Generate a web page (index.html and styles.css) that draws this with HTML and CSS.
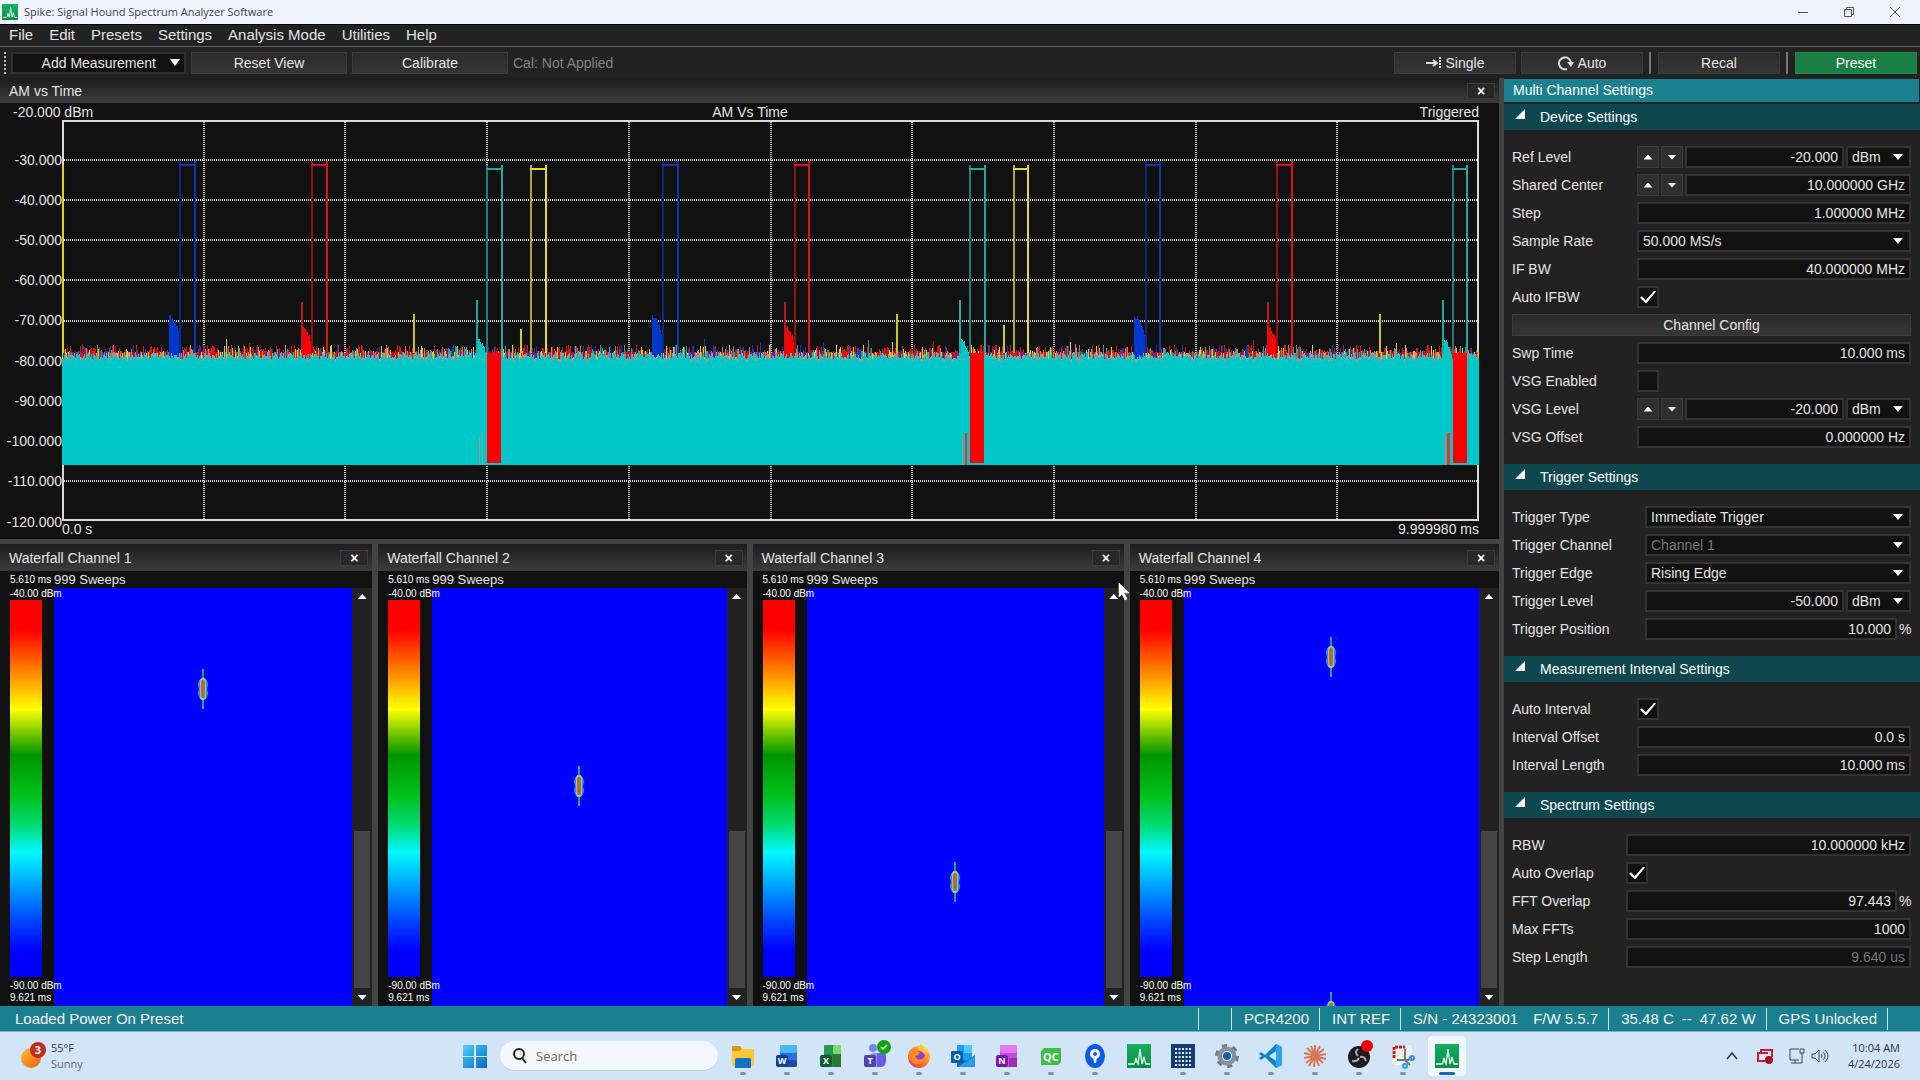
FILE: index.html
```html
<!DOCTYPE html>
<html lang="en">
<head>
<meta charset="utf-8">
<title>Spike: Signal Hound Spectrum Analyzer Software</title>
<link rel="stylesheet" href="styles.css">
</head>
<body>
<svg class="defs" aria-hidden="true">
  <defs>
    <linearGradient id="gGreen" x1="0" y1="0" x2="0" y2="1"><stop offset="0" stop-color="#16b060"/><stop offset="1" stop-color="#0a8c46"/></linearGradient>
    <linearGradient id="gWin" x1="0" y1="0" x2="1" y2="1"><stop offset="0" stop-color="#4fd0f8"/><stop offset="1" stop-color="#0468c8"/></linearGradient>
    <linearGradient id="gSun" x1="0" y1="0" x2="1" y2="1"><stop offset="0" stop-color="#fbc02d"/><stop offset="1" stop-color="#ef5f10"/></linearGradient>
    <linearGradient id="gFox" x1="1" y1="0" x2="0" y2="1"><stop offset="0" stop-color="#ffe040"/><stop offset=".5" stop-color="#ff7a20"/><stop offset="1" stop-color="#e8206a"/></linearGradient>
    <symbol id="spike" viewBox="0 0 24 24"><rect width="24" height="24" fill="url(#gGreen)"/><path d="M1 20h6l1-2 1-4 1 4 1 2 2-15 2 15 1-3 1-4 1 4 1 3h4" fill="none" stroke="#e6fff0" stroke-width="1.300"/></symbol>
    <symbol id="burst" viewBox="0 0 12 40"><path d="M6 0v40" stroke="#18b0c8" stroke-width="2"/><path d="M6 3v5M6 32v5" stroke="#2a9a70" stroke-width="2"/><path d="M6 8q5 3 5 8l-1 4 1 4q0 5-5 8q-5-3-5-8l1-4-1-4q0-5 5-8z" fill="#10a0e8"/><rect x="3" y="9" width="6" height="22" rx="3" fill="#98c890"/><rect x="4" y="11" width="4" height="18" rx="2" fill="#b86830"/></symbol>
  </defs>
</svg>

<header class="titlebar">
  <svg class="titlebar-icon"><use href="#spike"/></svg>
  <span class="titlebar-text">Spike: Signal Hound Spectrum Analyzer Software</span>
  <div class="window-buttons">
    <button aria-label="Minimize"><svg width="12" height="12"><path d="M1 6.500h10" stroke="#555" fill="none"/></svg></button>
    <button aria-label="Restore"><svg width="12" height="12"><path d="M1.500 3.500h7v7h-7zM3.500 3v-1.500h7v7h-1.500" stroke="#555" fill="none"/></svg></button>
    <button aria-label="Close"><svg width="12" height="12"><path d="M1 1l10 10M11 1l-10 10" stroke="#555" fill="none"/></svg></button>
  </div>
</header>

<nav class="menubar">
  <a href="#">File</a><a href="#">Edit</a><a href="#">Presets</a><a href="#">Settings</a><a href="#">Analysis Mode</a><a href="#">Utilities</a><a href="#">Help</a>
</nav>

<div class="toolbar">
  <span class="grip"></span>
  <button class="tool tool-menu"><span>Add Measurement</span><i class="tri-down"></i></button>
  <button class="tool tool-wide">Reset View</button>
  <button class="tool tool-wide">Calibrate</button>
  <span class="cal-state">Cal: Not Applied</span>
  <div class="toolbar-right">
    <button class="tool"><svg width="16" height="14"><path d="M0 7h11M7 4l4 3-4 3" fill="none" stroke="#ddd" stroke-width="2"/><path d="M14 1v12" stroke="#ddd" stroke-width="2" stroke-dasharray="2 1"/></svg>Single</button>
    <button class="tool"><svg width="16" height="16"><path d="M9 14A6 6 0 1 1 13 8" fill="none" stroke="#ddd" stroke-width="2"/><path d="M9 7h7l-3 5z" fill="#ddd"/></svg>Auto</button>
    <span class="tool-sep"></span>
    <button class="tool">Recal</button>
    <span class="tool-sep"></span>
    <button class="tool tool-preset">Preset</button>
  </div>
</div>

<main class="workspace">
  <div class="views">
    <section class="view view-time">
      <h2 class="view-title">AM vs Time<button class="view-close" aria-label="Close view">×</button></h2>
      <div class="plot">
        <div class="plot-head"><span class="plot-ref">-20.000 dBm</span><span class="plot-name">AM Vs Time</span><span class="plot-state">Triggered</span></div>
        <div class="plot-ticks">
          <i></i><span>-30.000</span><span>-40.000</span><span>-50.000</span><span>-60.000</span><span>-70.000</span><span>-80.000</span><span>-90.000</span><span>-100.000</span><span>-110.000</span><span class="tick-last">-120.000</span>
        </div>
        <div class="plot-area"><canvas id="trace"></canvas></div>
        <div class="plot-foot"><span>0.0 s</span><span>9.999980 ms</span></div>
      </div>
    </section>

    <div class="waterfalls">
      <section class="view">
        <h2 class="view-title">Waterfall Channel 1<button class="view-close" aria-label="Close view">×</button></h2>
        <div class="fall">
          <div class="fall-head"><small>5.610 ms</small><span>999 Sweeps</span></div>
          <div class="fall-scale"><small>-40.00 dBm</small><div class="fall-ramp"></div><small>-90.00 dBm</small><small>9.621 ms</small></div>
          <div class="fall-area"><svg class="burst" style="top:24.2%"><use href="#burst"/></svg></div>
          <div class="scroll"><i class="tri-up"></i><div class="scroll-track"><div class="scroll-thumb"></div></div><i class="tri-down small"></i></div>
        </div>
      </section>
      <section class="view">
        <h2 class="view-title">Waterfall Channel 2<button class="view-close" aria-label="Close view">×</button></h2>
        <div class="fall">
          <div class="fall-head"><small>5.610 ms</small><span>999 Sweeps</span></div>
          <div class="fall-scale"><small>-40.00 dBm</small><div class="fall-ramp"></div><small>-90.00 dBm</small><small>9.621 ms</small></div>
          <div class="fall-area"><svg class="burst" style="top:47.3%"><use href="#burst"/></svg></div>
          <div class="scroll"><i class="tri-up"></i><div class="scroll-track"><div class="scroll-thumb"></div></div><i class="tri-down small"></i></div>
        </div>
      </section>
      <section class="view">
        <h2 class="view-title">Waterfall Channel 3<button class="view-close" aria-label="Close view">×</button></h2>
        <div class="fall">
          <div class="fall-head"><small>5.610 ms</small><span>999 Sweeps</span></div>
          <div class="fall-scale"><small>-40.00 dBm</small><div class="fall-ramp"></div><small>-90.00 dBm</small><small>9.621 ms</small></div>
          <div class="fall-area"><svg class="burst" style="top:70.3%"><use href="#burst"/></svg></div>
          <div class="scroll"><i class="tri-up"></i><div class="scroll-track"><div class="scroll-thumb"></div></div><i class="tri-down small"></i></div>
        </div>
        <svg class="pointer" width="12" height="19" viewBox="0 0 12 19"><path d="M1 1v14l3-3 3 6 2-1-3-6h5z" fill="#fff" stroke="#fff" stroke-width=".6"/></svg>
      </section>
      <section class="view">
        <h2 class="view-title">Waterfall Channel 4<button class="view-close" aria-label="Close view">×</button></h2>
        <div class="fall">
          <div class="fall-head"><small>5.610 ms</small><span>999 Sweeps</span></div>
          <div class="fall-scale"><small>-40.00 dBm</small><div class="fall-ramp"></div><small>-90.00 dBm</small><small>9.621 ms</small></div>
          <div class="fall-area"><svg class="burst" style="top:16.5%"><use href="#burst"/></svg><svg class="burst" style="top:101.5%"><use href="#burst"/></svg></div>
          <div class="scroll"><i class="tri-up"></i><div class="scroll-track"><div class="scroll-thumb"></div></div><i class="tri-down small"></i></div>
        </div>
      </section>
    </div>
  </div>

  <aside class="side">
    <h2 class="side-title">Multi Channel Settings</h2>

    <h3 class="group-title"><i class="corner"></i>Device Settings</h3>
    <div class="group">
      <div class="row"><label for="ref">Ref Level</label><button class="step" aria-label="Increase"><i class="tri-up"></i></button><button class="step" aria-label="Decrease"><i class="tri-down small"></i></button><input id="ref" type="text" value="-20.000"><span class="pick unit"><select aria-label="Ref Level unit"><option>dBm</option></select></span></div>
      <div class="row"><label for="center">Shared Center</label><button class="step" aria-label="Increase"><i class="tri-up"></i></button><button class="step" aria-label="Decrease"><i class="tri-down small"></i></button><input id="center" type="text" value="10.000000 GHz"></div>
      <div class="row"><label for="stepf">Step</label><input id="stepf" type="text" value="1.000000 MHz"></div>
      <div class="row"><label for="rate">Sample Rate</label><span class="pick"><select id="rate"><option>50.000 MS/s</option></select></span></div>
      <div class="row"><label for="ifbw">IF BW</label><input id="ifbw" type="text" value="40.000000 MHz"></div>
      <div class="row"><label for="autoif">Auto IFBW</label><input id="autoif" type="checkbox" checked></div>
      <button class="tool tool-config">Channel Config</button>
      <div class="row"><label for="swp">Swp Time</label><input id="swp" type="text" value="10.000 ms"></div>
      <div class="row"><label for="vsgon">VSG Enabled</label><input id="vsgon" type="checkbox"></div>
      <div class="row"><label for="vsgl">VSG Level</label><button class="step" aria-label="Increase"><i class="tri-up"></i></button><button class="step" aria-label="Decrease"><i class="tri-down small"></i></button><input id="vsgl" type="text" value="-20.000"><span class="pick unit"><select aria-label="VSG Level unit"><option>dBm</option></select></span></div>
      <div class="row"><label for="vsgo">VSG Offset</label><input id="vsgo" type="text" value="0.000000 Hz"></div>
    </div>

    <h3 class="group-title"><i class="corner"></i>Trigger Settings</h3>
    <div class="group group-trigger">
      <div class="row"><label for="ttype">Trigger Type</label><span class="pick"><select id="ttype"><option>Immediate Trigger</option></select></span></div>
      <div class="row"><label for="tch">Trigger Channel</label><span class="pick"><select id="tch" disabled><option>Channel 1</option></select></span></div>
      <div class="row"><label for="tedge">Trigger Edge</label><span class="pick"><select id="tedge"><option>Rising Edge</option></select></span></div>
      <div class="row"><label for="tlev">Trigger Level</label><input id="tlev" type="text" value="-50.000"><span class="pick unit"><select aria-label="Trigger Level unit"><option>dBm</option></select></span></div>
      <div class="row"><label for="tpos">Trigger Position</label><input id="tpos" type="text" value="10.000"><span class="pct">%</span></div>
    </div>

    <h3 class="group-title"><i class="corner"></i>Measurement Interval Settings</h3>
    <div class="group">
      <div class="row"><label for="autoint">Auto Interval</label><input id="autoint" type="checkbox" checked></div>
      <div class="row"><label for="ioff">Interval Offset</label><input id="ioff" type="text" value="0.0 s"></div>
      <div class="row"><label for="ilen">Interval Length</label><input id="ilen" type="text" value="10.000 ms"></div>
    </div>

    <h3 class="group-title"><i class="corner"></i>Spectrum Settings</h3>
    <div class="group group-spectrum">
      <div class="row"><label for="rbw">RBW</label><input id="rbw" type="text" value="10.000000 kHz"></div>
      <div class="row"><label for="autoov">Auto Overlap</label><input id="autoov" type="checkbox" checked></div>
      <div class="row"><label for="fft">FFT Overlap</label><input id="fft" type="text" value="97.443"><span class="pct">%</span></div>
      <div class="row"><label for="maxf">Max FFTs</label><input id="maxf" type="text" value="1000"></div>
      <div class="row"><label for="slen">Step Length</label><input id="slen" type="text" value="9.640 us" disabled></div>
    </div>
  </aside>
</main>

<footer class="statusbar">
  <span class="status-msg">Loaded Power On Preset</span>
  <span class="cell cell-blank"></span>
  <span class="cell">PCR4200</span>
  <span class="cell">INT REF</span>
  <span class="cell"><span>S/N - 24323001</span><span>F/W 5.5.7</span></span>
  <span class="cell cell-temp"><span>35.48 C</span><span>--</span><span>47.62 W</span></span>
  <span class="cell">GPS Unlocked</span>
  <span class="cell cell-end"></span>
</footer>

<div class="taskbar">
  <div class="weather">
    <svg width="32" height="32"><circle cx="12" cy="18" r="10" fill="url(#gSun)"/><circle cx="19" cy="10" r="8" fill="#c42b1c"/><text x="19" y="14" text-anchor="middle" class="badge-text">3</text></svg>
    <div><div>55°F</div><div class="muted">Sunny</div></div>
  </div>
  <div class="dock">
    <button class="start" aria-label="Start"><svg width="24" height="24"><path d="M0 1h11v11H0zM13 1h11v11H13zM0 13h11v11H0zM13 13h11v11H13z" fill="url(#gWin)"/></svg></button>
    <label class="search"><svg width="16" height="18"><circle cx="8" cy="7" r="5" fill="none" stroke="#222" stroke-width="2"/><path d="M11 11l4 5" stroke="#222" stroke-width="2"/></svg><input type="text" placeholder="Search" aria-label="Search"></label>
    <div class="apps">
      <button class="app" aria-label="Files"><svg viewBox="0 0 24 24"><path d="M1 2h8l2 3h12v17H1z" fill="#fdc836"/><path d="M1 2h8l2 3-2 2H1z" fill="#d99a10"/><path d="M4 16q0-2 2-2h12q2 0 2 2v8H4z" fill="#1173c4"/></svg></button>
      <button class="app" aria-label="Word"><svg viewBox="0 0 24 24"><rect x="5" y="1" width="17" height="22" rx="2" fill="#2b6fd8"/><rect x="5" y="1" width="17" height="8" rx="2" fill="#48b8f8"/><rect x="5" y="16" width="17" height="7" rx="2" fill="#1a48b0"/><rect x="1" y="11" width="12" height="12" rx="2" fill="#103f9c"/><text x="7" y="20" class="glyph">W</text></svg></button>
      <button class="app" aria-label="Excel"><svg viewBox="0 0 24 24"><rect x="5" y="1" width="17" height="22" rx="2" fill="#21874a"/><rect x="5" y="1" width="9" height="9" rx="1" fill="#1f9c4c"/><rect x="14" y="1" width="8" height="9" rx="1" fill="#7fd870"/><rect x="14" y="10" width="8" height="13" fill="#2a7a30"/><rect x="1" y="11" width="12" height="12" rx="2" fill="#0e5c2f"/><text x="7" y="20" class="glyph">X</text></svg></button>
      <button class="app" aria-label="Teams"><svg viewBox="0 0 24 24"><circle cx="10" cy="4" r="4" fill="#7b83eb"/><rect x="6" y="9" width="16" height="14" rx="5" fill="#8f8df0"/><path d="M14 9h6q3 0 3 3v5q0 6-6 6h-3z" fill="#6a5fe0"/><rect x="1" y="11" width="12" height="12" rx="2" fill="#4b45b8"/><text x="7" y="20" class="glyph">T</text><circle cx="21" cy="3" r="7" fill="#13a10e"/><path d="M18 3l2 2 4-4" stroke="#fff" stroke-width="1.500" fill="none"/></svg></button>
      <button class="app" aria-label="Firefox"><svg viewBox="0 0 24 24"><circle cx="12" cy="13" r="11" fill="url(#gFox)"/><path d="M13 0q6 3 8 8l-5 1-5-4z" fill="#ffc830"/><circle cx="12" cy="13" r="6" fill="#8c40e0"/><path d="M2 7q4-3 7 0l4 1q-1 4-5 4l2 3q5 2 8-3 0 9-9 8-8-1-7-13z" fill="#ff8a20"/></svg></button>
      <button class="app" aria-label="Outlook"><svg viewBox="0 0 24 24"><rect x="6" y="1" width="15" height="17" rx="1" fill="#1aa0e8"/><path d="M13 1h8v8h-8z" fill="#50c8ff"/><path d="M6 12l9 5 9-6v12H6z" fill="#0f66b8"/><path d="M6 23l18-11v11z" fill="#2a9be8"/><rect x="0" y="7" width="12" height="12" rx="1" fill="#0a5cae"/><text x="6" y="16" class="glyph">O</text></svg></button>
      <button class="app" aria-label="OneNote"><svg viewBox="0 0 24 24"><rect x="5" y="1" width="17" height="22" rx="2" fill="#c050d8"/><rect x="5" y="1" width="17" height="8" rx="2" fill="#e478f0"/><rect x="14" y="14" width="8" height="9" fill="#9a2fb8"/><rect x="1" y="11" width="12" height="12" rx="2" fill="#7719aa"/><text x="7" y="20" class="glyph">N</text></svg></button>
      <button class="app" aria-label="QC"><svg viewBox="0 0 24 24"><path d="M5 4h17v14l-3 3H2V7z" fill="#3cc044"/><text x="12" y="17" class="glyph qc">QC</text></svg></button>
      <button class="app" aria-label="Map pin"><svg viewBox="0 0 24 24"><ellipse cx="12" cy="12" rx="10" ry="12" fill="#0c5ce8"/><circle cx="12" cy="10" r="5" fill="#fff"/><path d="M10 13h4l-1 6h-2z" fill="#fff"/><circle cx="12" cy="10" r="2" fill="#0c5ce8"/></svg></button>
      <button class="app closed" aria-label="Spike"><svg><use href="#spike"/></svg></button>
      <button class="app" aria-label="Grid"><svg viewBox="0 0 24 24"><rect width="24" height="24" fill="#133c72"/><path d="M4 5h17M4 9h17M4 13h17M4 17h17M4 21h17" stroke="#d8e8ff" stroke-width="2" stroke-dasharray="2 1.500"/></svg></button>
      <button class="app" aria-label="Settings"><svg viewBox="0 0 24 24"><circle cx="12" cy="12" r="10" fill="none" stroke="#757c84" stroke-width="4" stroke-dasharray="5 5.470"/><circle cx="12" cy="12" r="7" fill="none" stroke="#8a9098" stroke-width="5"/><circle cx="12" cy="12" r="5" fill="#f0f6fc"/><circle cx="12" cy="12" r="4" fill="#0f5fb0"/></svg></button>
      <button class="app" aria-label="Code"><svg viewBox="0 0 24 24"><path d="M17 0l6 3v18l-6 3L6 13l-4 3-2-2 3-2-3-2 2-2 4 3zM17 7l-7 5 7 5z" fill="#0f7fcc" fill-rule="evenodd"/><path d="M17 0l6 3v18l-6 3z" fill="#2ba4ee"/></svg></button>
      <button class="app" aria-label="Assistant"><svg viewBox="0 0 24 24"><path d="M12 12V1M12 12l5-10M12 12l9-7M12 12l11-2M12 12l11 3M12 12l8 7M12 12l4 10M12 12l-1 11M12 12L6 22M12 12l-9 7M12 12L1 14M12 12L1 9M12 12L4 4M12 12L8 2" stroke="#d97757" stroke-width="2"/></svg></button>
      <button class="app" aria-label="Recorder"><svg viewBox="0 0 24 24"><circle cx="12" cy="13" r="11" fill="#1c1c20"/><g fill="none" stroke="#aab" stroke-width="2"><path d="M11 5q-4 3 0 7M5 17q5 1 7-3M19 17q-1-5-6-4"/></g><circle cx="20" cy="2" r="6" fill="#f00008"/></svg></button>
      <button class="app" aria-label="Snip"><svg viewBox="0 0 24 24"><rect x="1" y="1" width="20" height="20" rx="3" fill="#f4f0ee"/><path d="M3 14V3h11" fill="none" stroke="#c82020" stroke-width="3" stroke-dasharray="3 1"/><path d="M14 5v11l5 5M6 16h11l4-2" fill="none" stroke="#707880" stroke-width="2"/><circle cx="21" cy="14" r="2" fill="none" stroke="#2a9be0" stroke-width="2"/><circle cx="14" cy="22" r="2" fill="none" stroke="#2a9be0" stroke-width="2"/></svg></button>
      <button class="app active" aria-label="Spike window"><svg><use href="#spike"/></svg></button>
    </div>
  </div>
  <div class="tray">
    <svg width="12" height="12"><path d="M1 9l5-6 5 6" fill="none" stroke="#333" stroke-width="1.500"/></svg>
    <svg class="tray-rec" width="16" height="16"><path d="M4 5V2h11v7M11 5H1v8h7" fill="none" stroke="#c02030" stroke-width="2"/><circle cx="12" cy="12" r="4" fill="#a01020"/></svg>
    <svg class="tray-net" width="18" height="18"><path d="M11 2H2v11h9M7 13v3M3 16h8M12 2h4v4h-4zM14 6v10h-3" fill="none" stroke="#444"/></svg>
    <svg width="18" height="16"><path d="M1 6v4h3l4 4V2L4 6z" fill="none" stroke="#444"/><path d="M10 6q2 2 0 4M12 4q4 4 0 8M14 2q6 6 0 12" fill="none" stroke="#444"/></svg>
    <div class="clock"><div>10:04 AM</div><div>4/24/2026</div></div>
  </div>
</div>
<script src="trace.js"></script>
</body>
</html>
```
FILE: styles.css
```css
* { box-sizing: border-box; }
body {
  margin: 0;
  height: 100vh;
  display: flex;
  flex-direction: column;
  overflow: hidden;
  background: #222;
  color: #e4e4e4;
  font: 14px/18px "Liberation Sans", Arial, sans-serif;
}
button, input, select { font: inherit; color: inherit; margin: 0; }
button { padding: 0; border: 0; background: none; }
h2, h3 { margin: 0; font: inherit; }
.defs { position: absolute; width: 0; height: 0; }

/* title bar */
.titlebar {
  display: flex;
  align-items: center;
  gap: 6px;
  height: 24px;
  padding: 0 2px;
  background: #eff3fb;
  color: #444;
  font: 11px/16px "Open Sans", sans-serif;
}
.titlebar-icon { width: 16px; height: 16px; }
.window-buttons { margin-left: auto; display: flex; align-items: center; }
.window-buttons button { width: 46px; height: 20px; display: flex; align-items: center; justify-content: center; }

/* menus and tools */
.menubar {
  display: flex;
  align-items: center;
  gap: 16px;
  height: 23px;
  padding: 0 9px 2px;
  border-top: 1px solid #000;
  border-bottom: 1px solid #666;
  font-size: 15px;
}
.menubar a { color: inherit; text-decoration: none; }
.toolbar {
  display: flex;
  align-items: center;
  gap: 5px;
  height: 31px;
  padding: 0 3px 0 4px;
}
.grip { width: 2px; height: 22px; background: repeating-linear-gradient(#bbb 0 2px, transparent 2px 4px); }
.tool {
  display: flex;
  align-items: center;
  justify-content: center;
  gap: 4px;
  width: 122px;
  height: 22px;
  border: 1px solid #3c3c3c;
  background: linear-gradient(#2c2c2c, #363636);
}
.tool-wide { width: 156px; }
.tool-menu { width: 175px; background: #111; justify-content: flex-end; gap: 14px; padding-right: 4px; border: 2px solid #303030; }
.tool-preset { background: #198044; border-color: #1c8a4a; color: #fff; }
.cal-state { color: #828282; }
.toolbar-right { margin-left: auto; display: flex; align-items: center; gap: 5px; }
.tool-sep { width: 2px; height: 22px; margin: 0 2px 0 1px; background: #777; }
.tri-down, .tri-up { display: block; width: 10px; height: 7px; background: #fff; clip-path: polygon(0 0, 100% 0, 50% 100%); }
.tri-down.small { width: 9px; height: 5px; }
.tri-up { width: 9px; height: 5px; clip-path: polygon(50% 0, 100% 100%, 0 100%); }

/* workspace */
.workspace { flex: 1; min-height: 0; display: flex; background: #444; gap: 5px; }
.views { flex: 1; min-width: 0; display: flex; flex-direction: column; gap: 5px; }
.view { position: relative; display: flex; flex-direction: column; min-width: 0; background: #111; }
.view-time { flex: 461; min-height: 0; }
.view-title {
  display: flex;
  align-items: center;
  justify-content: space-between;
  height: 25px;
  padding: 0 4px 0 9px;
  background: linear-gradient(#1c1c1c, #3c3c3c);
}
.waterfalls .view-title { height: 27px; }
.view-close { width: 28px; height: 16px; border: 1px solid #3c3c3c; background: #282828; color: #fff; font-weight: bold; line-height: 12px; }

.plot {
  flex: 1;
  min-height: 0;
  display: grid;
  grid-template: 17px minmax(0, 1fr) 18px / 62px minmax(0, 1fr);
  padding-right: 20px;
}
.plot-head { grid-column: 1 / 3; display: grid; grid-template-columns: 1fr auto 1fr; padding-left: 13px; }
.plot-name { margin-left: 8px; }
.plot-state { text-align: right; }
.plot-ticks { display: grid; grid-template-rows: 1fr repeat(9, 2fr) 1fr; text-align: right; }
.plot-ticks span { align-self: center; }
.plot-ticks .tick-last { align-self: end; margin-bottom: -10px; }
.plot-area { min-height: 0; min-width: 0; overflow: hidden; }
.plot-area canvas { display: block; width: 100%; height: 100%; }
.plot-foot { grid-column: 2; display: flex; justify-content: space-between; line-height: 16px; }

.waterfalls { flex: 462; min-height: 0; display: grid; grid-template-columns: 372fr 368fr 371fr 369fr; gap: 6px; }
.fall { flex: 1; min-height: 0; display: grid; grid-template: 17px minmax(0, 1fr) / 54px minmax(0, 1fr) 20px; }
.fall-head { grid-column: 1 / 4; display: flex; align-items: center; padding-left: 10px; font-size: 13px; line-height: 17px; }
small { font-size: 10px; line-height: 12px; white-space: nowrap; color: #fff; }
.fall-head small { width: 44px; }
.fall-scale { display: flex; flex-direction: column; padding: 0 0 2px 10px; position: relative; z-index: 1; }
.fall-ramp {
  flex: 1;
  width: 32px;
  margin-bottom: 3px;
  background: linear-gradient(#f00 8%, #ff7800 18%, #ff0 29%, #009600 41%, #00c01e 52%, #00dc78 60%, #00faff 67%, #00a0ff 76%, #0046ff 85%, #00f 93%);
}
.fall-area { position: relative; overflow: hidden; background: #00f; }
.burst { position: absolute; left: 50%; width: 12px; height: 40px; margin: -20px 0 0 -6px; }
.scroll { display: flex; flex-direction: column; align-items: center; justify-content: space-between; padding: 6px 2px; gap: 7px; background: #222; }
.scroll-track { flex: 1; width: 100%; display: flex; flex-direction: column; justify-content: flex-end; }
.scroll-thumb { height: 41%; background: #444; }
.pointer { position: absolute; top: 38px; right: -6px; z-index: 3; }

/* settings panel */
.side { width: 416px; padding-top: 1px; background: #222; overflow: hidden; }
.side-title { height: 23px; padding: 2px 9px; margin-right: 1px; background: #1a7f8e; color: #fff; }
.group-title { display: flex; align-items: center; gap: 15px; height: 26px; padding-left: 11px; background: #0f474f; color: #fff; }
.side-title + .group-title { margin-top: 2px; }
.corner { width: 10px; height: 10px; margin-top: -6px; background: #fff; clip-path: polygon(100% 0, 100% 100%, 0 100%); }
.group { display: flex; flex-direction: column; gap: 6px; padding: 16px 9px 16px 8px; }
.row { display: flex; align-items: center; gap: 2px; height: 22px; }
.row label { width: 123px; }
.group-trigger label { width: 131px; }
.group-spectrum label { width: 112px; }
.row input[type="text"] {
  flex: 1;
  min-width: 0;
  width: 0;
  height: 22px;
  padding: 0 4px;
  border: 2px solid #333;
  background: #111;
  text-align: right;
}
.row input:disabled, select:disabled { color: #777; opacity: 1; }
.step { display: flex; align-items: center; justify-content: center; width: 22px; height: 22px; border: 1px solid #3c3c3c; background: #2f2f2f; }
.pick { position: relative; flex: 1; display: flex; }
.pick.unit { flex: none; width: 65px; }
.pick select { appearance: none; width: 100%; height: 22px; padding: 0 4px; border: 2px solid #333; border-radius: 0; background: #111; }
.pick::after { content: ""; position: absolute; right: 8px; top: 8px; width: 10px; height: 6px; background: #fff; clip-path: polygon(0 0, 100% 0, 50% 100%); pointer-events: none; }
input[type="checkbox"] { appearance: none; display: flex; align-items: center; justify-content: center; width: 22px; height: 22px; border: 2px solid #333; background: #111; }
input[type="checkbox"]:checked::before { content: ""; width: 16px; height: 13px; background: #fff; clip-path: polygon(0 55%, 12% 45%, 36% 75%, 90% 0, 100% 8%, 38% 100%); }
.tool-config { width: auto; height: 22px; }
.pct { width: 12px; }

/* status bar */
.statusbar { display: flex; align-items: center; height: 26px; padding: 1px 32px 0 0; border-bottom: 1px solid #7fb4c0; background: #1a7f8e; color: #f4f4f4; font-size: 15px; }
.status-msg { margin-left: 15px; margin-right: auto; }
.cell { display: flex; gap: 15px; height: 22px; padding: 2px 10px 2px 12px; border-left: 1px solid #cfe4e8; white-space: nowrap; }
.cell-temp { gap: 8px; }
.cell-blank { width: 33px; }
.cell-end { padding: 0; }

/* taskbar */
.taskbar {
  display: grid;
  grid-template-columns: 1fr auto 1fr;
  align-items: center;
  height: 48px;
  background: #d1e5f6;
  color: #333;
  font: 11px/16px "Open Sans", sans-serif;
}
.weather { display: flex; align-items: center; gap: 0; padding-left: 19px; }
.muted { color: #666; }
.badge-text { font-size: 11px; font-weight: bold; fill: #fff; }
.dock { display: flex; align-items: center; padding-left: 12px; }
.start { margin-right: 13px; height: 24px; }
.search { display: flex; align-items: center; gap: 9px; width: 218px; height: 30px; padding: 0 11px; border-radius: 15px; background: #f2f7fc; border-bottom: 1px solid #bccbd8; }
.search input { width: 120px; padding: 0; border: 0; background: none; font-size: 13px; }
.search input::placeholder { color: #666; opacity: 1; }
.apps { display: flex; padding-left: 3px; }
.app { position: relative; width: 38px; height: 40px; margin: 0 3px; border-radius: 4px; display: flex; align-items: center; justify-content: center; }
.app svg { width: 24px; height: 24px; overflow: visible; }
.app::after { content: ""; position: absolute; bottom: 1px; width: 6px; height: 3px; border-radius: 2px; background: #87919a; }
.app.closed::after { display: none; }
.app.active { background: #f2f7fc; }
.app.active::after { width: 16px; background: #1565c0; }
.glyph { font: bold 9px "Open Sans", sans-serif; fill: #fff; text-anchor: middle; }
.glyph.qc { font-size: 11px; }
.tray { display: flex; align-items: center; justify-content: flex-end; gap: 5px; padding-right: 20px; }
.tray-rec { margin: 0 10px 0 14px; }
.clock { text-align: right; margin-left: 14px; }
```
FILE: trace.js
```js
// Draws the AM-vs-time graticule and the four channel traces.
const canvas = document.getElementById('trace');
const SPAN_MS = 10, TOP_DB = -20, RANGE_DB = 100, PERIOD = 3.406;

function draw() {
  const w = canvas.width = canvas.clientWidth;
  const h = canvas.height = canvas.clientHeight;
  const c = canvas.getContext('2d');
  const px = t => Math.round(t / SPAN_MS * w);
  const py = db => Math.round((TOP_DB - db) / RANGE_DB * h);
  let seed = 4200;
  const rnd = () => (seed = (seed * 16807) % 2147483647) / 2147483647;
  const bar = (x, top, bottom, color, width = 1) => {
    c.fillStyle = color;
    c.fillRect(x, top, width, bottom - top);
  };

  c.strokeStyle = '#d0d0d0';
  c.lineWidth = 2;
  c.setLineDash([1, 1]);
  for (let i = 1; i < 10; i++) {
    c.beginPath();
    c.moveTo(Math.round(i * w / 10), 0);
    c.lineTo(Math.round(i * w / 10), h);
    c.moveTo(0, Math.round(i * h / 10));
    c.lineTo(w, Math.round(i * h / 10));
    c.stroke();
  }
  c.setLineDash([]);
  c.strokeStyle = '#d8d8d8';
  c.strokeRect(1, 1, w - 2, h - 2);

  // noise peaks of the channels behind the last trace
  const floor = py(-78);
  const tones = ['#d81414', '#e01010', '#e01010', '#d8d020', '#1038c8', '#20a8a0', '#e07070'];
  for (let x = 0; x < w; x++) {
    const peak = rnd() ** 2 * 2 + (rnd() > 0.985 ? 1.5 : 0);
    bar(x, py(-78 + peak), floor + 8, tones[Math.floor(rnd() * tones.length)]);
  }

  const pulse = (t, top, dark, light) => {
    const a = px(t), b = px(t + 0.104), y = py(top);
    bar(a, y, floor, dark, 2);
    bar(b, y, floor, light, 2);
    bar(a, y + 3, y + 5, light, b - a);
  };
  const bump = (t, top, color) => {
    const a = px(t), n = px(t + 0.075) - a;
    for (let i = 0; i < n; i++) bar(a + i, py(top - 5 * (i / n) ** 2 - rnd()), floor + 6, color);
  };
  for (let k = 0; k < 3; k++) {
    const o = k * PERIOD;
    bump(0.755 + o, -68.5, '#0038d0');
    pulse(0.828 + o, -30.3, '#10297c', '#1238b0');
    bump(1.69 + o, -71, '#f00');
    bar(px(1.69 + o), py(-65.5), floor, '#c01818', 2);
    pulse(1.757 + o, -30.3, '#901414', '#d81414');
    if (k < 2) {
      pulse(3.302 + o, -31.3, '#b0a820', '#e0dc28');
      bar(px(3.235 + o), py(-72 + k), floor, '#d0cc20', 2);
    }
    bar(px(2.48 + o), py(-68.3), floor, '#c8c420', 2);
  }
  bar(0, py(-31.3), floor, '#d8d420', 2);

  // channel 4 fills the noise band
  const base = py(-106);
  for (let x = 0; x < w; x++) {
    const top = py(-78 - rnd() * 1.6);
    bar(x, top, top + 5, rnd() > 0.6 ? '#c09088' : '#30bcb8');
    bar(x, top + 3, base, '#00c8c8');
  }
  for (let k = 0; k < 3; k++) {
    const o = k * PERIOD;
    bump(2.925 + o, -74, '#00c8c8');
    bar(px(2.925 + o), py(-65), floor, '#20a8a0', 2);
    bar(px(2.945 + o), py(-99), base, '#c08888', 1);
    bar(px(2.965 + o), py(-98), base, k ? '#f03030' : '#80a8a8', k + 1);
    bar(px(3.002 + o), py(-78), base - 2, '#f00', px(3.1 + o) - px(3.002 + o));
    pulse(2.994 + o, -31.3, '#207c78', '#22a8a4');
  }
}

draw();
window.addEventListener('resize', draw);
```
